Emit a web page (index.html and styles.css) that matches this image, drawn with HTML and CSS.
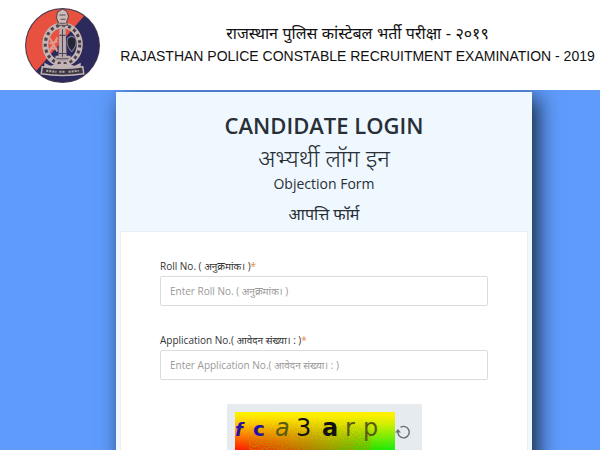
FILE: index.html
```
<!DOCTYPE html>
<html lang="en">
<head>
    <meta charset="UTF-8">
    <meta name="viewport" content="width=device-width, initial-scale=1.0">
    <title>Candidate Login</title>
    <link rel="stylesheet" href="styles.css">
</head>
<body>

    <header class="site-header">
        <svg class="logo" viewBox="0 0 76 76" role="img" aria-label="Rajasthan Police">
            <defs>
                <clipPath id="disc"><circle cx="38" cy="38" r="36"/></clipPath>
            </defs>
            <circle cx="38" cy="38" r="37" fill="#44394c"/>
            <g clip-path="url(#disc)">
                <path d="M0 0h76v76H0z" fill="#2c2a5c"/>
                <path d="M0 0H67L14 61L0 76z" fill="#e8503f"/>
            </g>
            <!-- wreath -->
            <ellipse cx="38" cy="37" rx="17" ry="19" fill="none" stroke="#c3b5b5" stroke-width="6"/>
            <ellipse cx="38" cy="37" rx="17" ry="19" fill="none" stroke="#4d4048" stroke-width="3" stroke-dasharray="3 3"/>
            <!-- capital and pillar -->
            <path d="M33 18l1-3-2-4 1-6 5-3 4 2 2 5-2 6 1 3z" fill="#cbbcb8" stroke="#574850"/>
            <path d="M35 8h6M36 12h5M35 16h6" stroke="#574850"/>
            <path d="M35 20h6l1 28h4v5H31v-5h3z" fill="#b9abad"/>
            <path d="M38 22v27M35 28h6M34 46h8M32 51h12" stroke="#524554"/>
            <path d="M25 30l8 14M33 30l-8 14M25 36l8-2M25 41h8" fill="none" stroke="#dc9b8f" stroke-width="2"/>
            <path d="M43 31q4-4 8 0 2 7-4 13-6-6-4-13z" fill="#252735" stroke="#817c94"/>
            <!-- ribbon -->
            <path d="M20 55l6 3q12-4 24 0l6-3v5l-8 3q-10-3-20 0l-8-3z" fill="#c3b5b5"/>
            <path d="M18 59q20 3 40 0l1 7q-21 3-42 0z" fill="#3b3743" stroke="#c3b5b5" stroke-width="1.5"/>
            <path d="M22 63l10 1M35 64h5M44 64l10-1" stroke="#b4a7ae" stroke-width="2" stroke-dasharray="2 1"/>
        </svg>
        <div class="header-text">
            <p class="title-hindi">राजस्थान पुलिस कांस्टेबल भर्ती परीक्षा - २०१९</p>
            <p class="title-english">RAJASTHAN POLICE CONSTABLE RECRUITMENT EXAMINATION - 2019</p>
        </div>
    </header>

    <main class="login-card">
        <div class="card-heading">
            <h1>CANDIDATE LOGIN</h1>
            <h2>अभ्यर्थी लॉग इन</h2>
            <p class="form-name">Objection Form</p>
            <p class="form-name-hindi">आपत्ति फॉर्म</p>
        </div>

        <form class="login-form">
            <div class="form-group">
                <label for="roll">Roll No. ( अनुक्रमांक। )<span class="required">*</span></label>
                <input type="text" id="roll" placeholder="Enter Roll No. ( अनुक्रमांक। )" required>
            </div>
            <div class="form-group">
                <label for="application">Application No.( आवेदन संख्या। : )<span class="required">*</span></label>
                <input type="text" id="application" placeholder="Enter Application No.( आवेदन संख्या। : )" required>
            </div>
            <div class="captcha">
                <svg class="captcha-image" viewBox="0 0 160 40" role="img" aria-label="Captcha">
                    <defs>
                        <linearGradient id="side" x1="0" x2="1" y1="0" y2="0">
                            <stop offset="0" stop-color="#ff1800"/>
                            <stop offset="0.28" stop-color="#e04a00"/>
                            <stop offset="0.6" stop-color="#8aa000"/>
                            <stop offset="0.85" stop-color="#2be000"/>
                            <stop offset="1" stop-color="#18ee10"/>
                        </linearGradient>
                        <linearGradient id="top" x1="0" x2="0" y1="0" y2="1">
                            <stop offset="0.06" stop-color="#fff000"/>
                            <stop offset="0.3" stop-color="#fff000" stop-opacity="0.8"/>
                            <stop offset="0.95" stop-color="#fff000" stop-opacity="0"/>
                        </linearGradient>
                        <filter id="grain" x="0" y="0" width="1" height="1">
                            <feTurbulence type="fractalNoise" baseFrequency="0.9" numOctaves="2" seed="4"/>
                            <feColorMatrix values="0 0 0 0 0.45  0 0 0 0 0.3  0 0 0 0 0  0 0 0 5 -2.2"/>
                        </filter>
                        <linearGradient id="fade" x1="0" x2="0" y1="0" y2="1">
                            <stop offset="0.15" stop-color="#000"/>
                            <stop offset="0.8" stop-color="#fff"/>
                        </linearGradient>
                        <mask id="grainMask"><path d="M0 0h160v40H0z" fill="url(#fade)"/></mask>
                    </defs>
                    <path d="M0 0h160v40H0z" fill="url(#side)"/>
                    <path d="M0 0h160v40H0z" fill="url(#top)"/>
                    <g mask="url(#grainMask)"><rect x="14" width="122" height="40" filter="url(#grain)" opacity="0.7"/></g>
                    <g class="captcha-text">
                        <text class="blue slanted small" x="0" y="24">f</text>
                        <text class="blue" x="18" y="24">c</text>
                        <text class="thin slanted olive" x="40" y="24">a</text>
                        <text class="thin" x="61" y="24">3</text>
                        <text x="87" y="24">a</text>
                        <text class="thin olive" x="110" y="24">r</text>
                        <text class="thin olive" x="128" y="24">p</text>
                    </g>
                </svg>
                <button type="button" class="refresh" aria-label="Refresh captcha">
                    <svg viewBox="0 0 16 16" fill="none" stroke="#687078" stroke-width="1.4">
                        <path d="M5.500 3.300A5.700 5.700 0 1 1 3 9.500V7"/>
                        <path d="M0 8.500l3-3.500 3 3.500z" fill="#687078" stroke="none"/>
                    </svg>
                </button>
            </div>
        </form>
    </main>

</body>
</html>
```
FILE: styles.css
```
* { box-sizing: border-box; }
body { margin: 0; background-color: #5e9bfb; font-family: "Open Sans", "Noto Sans", sans-serif; color: #292f36; }
h1, h2, p { margin: 0; font-weight: normal; }

/* header stays above the shadow of the card */
.site-header { position: relative; z-index: 1; display: flex; align-items: center; height: 90px; padding: 0 4px 0 24px; background-color: #fff; }
.logo { flex: none; width: 77px; height: 77px; }
.header-text { flex: 1; text-align: center; padding-left: 18px; color: #111; font-family: "Liberation Sans", "Noto Sans", sans-serif; white-space: nowrap; }
.title-hindi { font-size: 16px; line-height: 22px; }
.title-english { font-size: 14px; line-height: 22px; }

.login-card { margin: 2px 68px 0 116px; padding: 0 4px; background-color: #eff7ff; box-shadow: 6px 6px 20px rgba(0, 0, 0, 0.75); }
.card-heading { padding: 16px 0 5px; text-align: center; }
.card-heading h1 { font-size: 22px; font-weight: 600; line-height: 34px; }
.card-heading h2 { font-size: 24px; font-weight: 300; line-height: 32px; }
.form-name { font-size: 14px; line-height: 20px; }
.form-name-hindi { padding-top: 8px; font-size: 16px; line-height: 24px; }

.login-form { padding: 24px 39px; background-color: #fff; border: 1px solid #e8eff1; }
.form-group { margin-bottom: 24px; }
.form-group label { display: block; font-size: 10px; line-height: 20px; color: #333; }
.form-group input { display: block; width: 100%; height: 30px; padding: 0 9px; border: 1px solid #dcdcdc; border-radius: 2px; font: inherit; font-size: 10px; }
.form-group input::placeholder { color: #999; opacity: 1; }
.required { color: #e28a3c; }

.captcha { display: flex; align-items: center; width: 195px; height: 56px; margin: 0 auto; padding: 0 8px; background-color: #e5ebef; border-radius: 2px; }
.captcha-image { flex: none; width: 160px; height: 40px; }
.captcha-text { font-family: "DejaVu Sans", sans-serif; font-size: 24px; font-weight: bold; fill: #111; }
.captcha-text .blue { font-size: 20px; fill: #2310a8; }
.captcha-text .small { font-size: 18px; }
.captcha-text .slanted { font-style: italic; }
.captcha-text .thin { font-weight: normal; }
.captcha-text .olive { fill: #5b5a12; }
.refresh { flex: none; width: 16px; height: 16px; padding: 0; border: 0; background: none; cursor: pointer; }
.refresh svg { display: block; width: 16px; height: 16px; }
```
